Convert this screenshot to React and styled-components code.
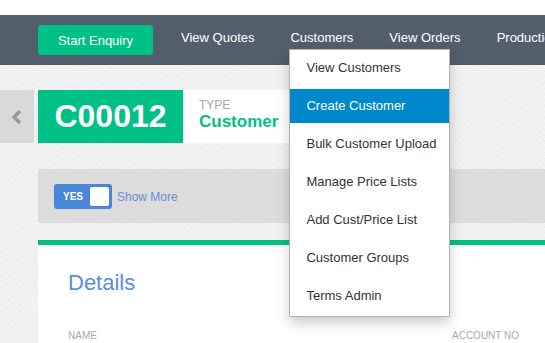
import React from "react";
import styled, { createGlobalStyle } from "styled-components";

const Global = createGlobalStyle`
  html, body { margin: 0; padding: 0; }
  body {
    font-family: "Liberation Sans", Arial, sans-serif;
    background: #ffffff;
    overflow: hidden;
    width: 545px;
    height: 343px;
  }
`;

const Page = styled.div`
  padding-top: 15px;
  height: 343px;
  width: 545px;
  overflow: hidden;
  box-sizing: border-box;
  display: flex;
  flex-direction: column;
`;

const Nav = styled.nav`
  height: 50px;
  flex-shrink: 0;
  background: #535e6d;
  display: flex;
  align-items: center;
  padding-left: 38px;
  position: relative;
  z-index: 5;
  white-space: nowrap;
`;

const StartButton = styled.button`
  flex-shrink: 0;
  height: 30px;
  width: 115px;
  border: none;
  border-radius: 3px;
  background: #00c185;
  color: #fff;
  font-family: "Liberation Sans", Arial, sans-serif;
  font-size: 13px;
  padding: 0;
  margin-right: 10px;
  cursor: pointer;
`;

const NavItem = styled.div`
  flex-shrink: 0;
  position: relative;
  color: #fff;
  font-size: 13px;
  padding: 0 18px;
  line-height: 50px;
  height: 50px;
  margin-top: -4px;
`;

const Dropdown = styled.ul`
  position: absolute;
  left: 17px;
  top: 36px;
  width: 159px;
  margin: 0;
  padding: 1px 0 3px;
  list-style: none;
  background: #fff;
  border: 1px solid #b3b3b3;
  box-shadow: 0 6px 12px rgba(0, 0, 0, 0.2);
  display: flex;
  flex-direction: column;
  gap: 4px;
  z-index: 10;
`;

const DropItem = styled.li`
  height: 34px;
  line-height: 34px;
  padding-left: 16px;
  font-size: 13px;
  color: ${(p) => (p.$active ? "#ffffff" : "#333333")};
  background: ${(p) => (p.$active ? "#0088cc" : "transparent")};
`;

const Main = styled.main`
  flex: 1;
  background-color: #f0f0f0;
  background-image:
    repeating-linear-gradient(60deg, rgba(255,255,255,0.35) 0 1px, transparent 1px 3px),
    repeating-linear-gradient(-30deg, rgba(0,0,0,0.015) 0 1px, transparent 1px 5px);
  padding-top: 25px;
  display: flex;
  flex-direction: column;
  min-height: 0;
`;

const HeaderRow = styled.div`
  display: flex;
  align-items: stretch;
  height: 53px;
  flex-shrink: 0;
`;

const BackPanel = styled.div`
  width: 34px;
  margin-right: 4px;
  background: #d9d9d9;
  display: flex;
  align-items: center;
  justify-content: center;
`;

const CodeBox = styled.div`
  width: 145px;
  background: #00c185;
  color: #fff;
  font-size: 32px;
  font-weight: bold;
  display: flex;
  align-items: center;
  justify-content: center;
`;

const TypePanel = styled.div`
  width: 240px;
  margin-left: 1px;
  background: #fff;
  padding: 9px 0 0 15px;
  box-sizing: border-box;
`;

const TypeLabel = styled.div`
  font-size: 12px;
  color: #a6a6a6;
  line-height: 13px;
`;

const TypeValue = styled.div`
  font-size: 17px;
  font-weight: bold;
  color: #00c185;
  line-height: 20px;
`;

const Band = styled.div`
  flex-shrink: 0;
  margin: 26px 0 0 38px;
  height: 54px;
  background: #dcdcdc;
  display: flex;
  align-items: center;
  padding-left: 16px;
  gap: 5px;
`;

const Toggle = styled.div`
  width: 58px;
  height: 25px;
  box-sizing: border-box;
  background: #4a86d8;
  border-radius: 3px;
  display: flex;
  align-items: center;
  padding: 0 3px 0 9px;
  justify-content: space-between;
`;

const ToggleText = styled.span`
  color: #fff;
  font-size: 10px;
  font-weight: bold;
`;

const Knob = styled.span`
  width: 19px;
  height: 19px;
  background: #fff;
  border-radius: 2px;
`;

const ShowMore = styled.a`
  font-size: 12px;
  color: #6a8bd8;
  text-decoration: none;
  margin-top: 2px;
`;

const Card = styled.section`
  margin: 17px 0 0 38px;
  flex: 1;
  background: #fff;
  border-top: 5px solid #00c185;
  padding: 25px 0 0 30px;
`;

const CardTitle = styled.h2`
  margin: 0;
  font-size: 22px;
  font-weight: normal;
  color: #5a8dde;
  line-height: 26px;
`;

const FieldRow = styled.div`
  display: flex;
  margin-top: 34px;
`;

const FieldLabel = styled.div`
  font-size: 10px;
  line-height: 12px;
  color: #aaaaaa;
  width: ${(p) => p.$w || "auto"};
`;

const menu = [
  "View Customers",
  "Create Customer",
  "Bulk Customer Upload",
  "Manage Price Lists",
  "Add Cust/Price List",
  "Customer Groups",
  "Terms Admin",
];

export default function App() {
  return (
    <>
      <Global />
      <Page>
        <Nav>
          <StartButton>Start Enquiry</StartButton>
          <NavItem>View Quotes</NavItem>
          <NavItem>
            Customers
            <Dropdown>
              {menu.map((m) => (
                <DropItem key={m} $active={m === "Create Customer"}>
                  {m}
                </DropItem>
              ))}
            </Dropdown>
          </NavItem>
          <NavItem>View Orders</NavItem>
          <NavItem>Production</NavItem>
        </Nav>
        <Main>
          <HeaderRow>
            <BackPanel>
              <svg width="14" height="18" viewBox="0 0 14 18">
                <path d="M10 3 L4 9 L10 15" fill="none" stroke="#999" strokeWidth="3.5" />
              </svg>
            </BackPanel>
            <CodeBox>C00012</CodeBox>
            <TypePanel>
              <TypeLabel>TYPE</TypeLabel>
              <TypeValue>Customer</TypeValue>
            </TypePanel>
          </HeaderRow>
          <Band>
            <Toggle>
              <ToggleText>YES</ToggleText>
              <Knob />
            </Toggle>
            <ShowMore>Show More</ShowMore>
          </Band>
          <Card>
            <CardTitle>Details</CardTitle>
            <FieldRow>
              <FieldLabel $w="384px">NAME</FieldLabel>
              <FieldLabel>ACCOUNT NO</FieldLabel>
            </FieldRow>
          </Card>
        </Main>
      </Page>
    </>
  );
}
